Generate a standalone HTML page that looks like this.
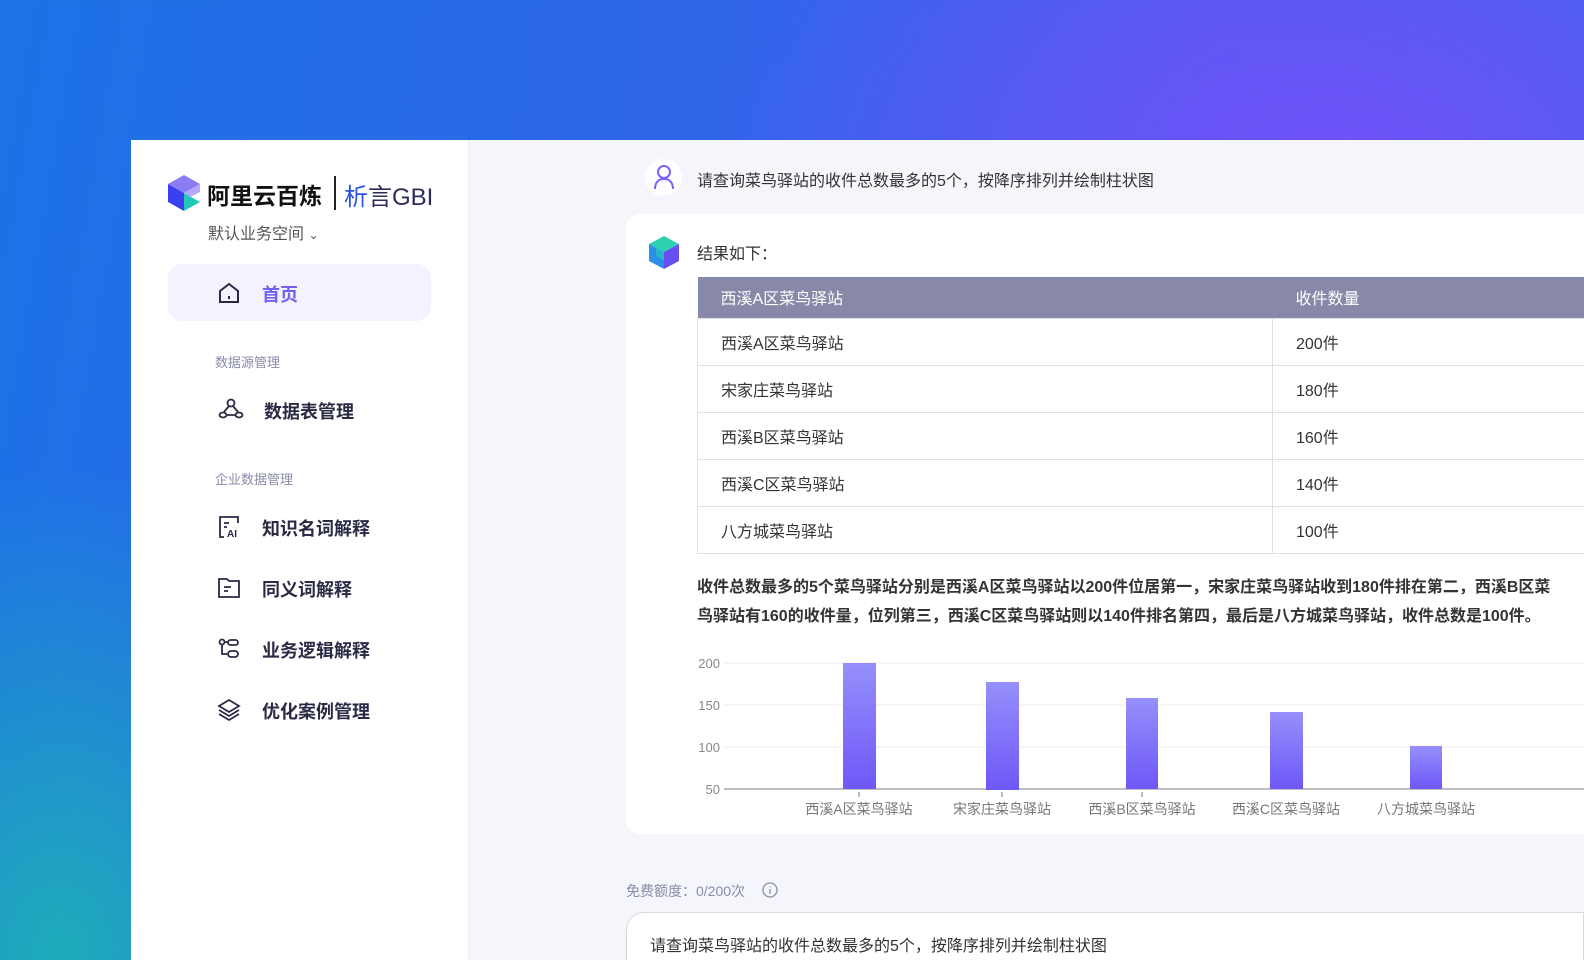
<!DOCTYPE html>
<html><head><meta charset="utf-8"><style>
*{margin:0;padding:0;box-sizing:border-box}
html,body{width:1584px;height:960px;overflow:hidden}
body{position:relative;font-family:"Liberation Sans","Noto Sans CJK SC",sans-serif;
background:
radial-gradient(ellipse 900px 500px at 1350px 160px, rgba(120,80,250,0.85), rgba(120,80,250,0) 70%),
radial-gradient(ellipse 500px 700px at 60px 960px, rgba(30,180,180,0.9), rgba(30,180,180,0) 70%),
linear-gradient(100deg,#1c72e6 0%,#2f66ea 40%,#4a5cef 70%,#3566ea 100%);}
.panel{position:absolute;left:131px;top:140px;width:1453px;height:820px;background:#f5f6fb}
.side{position:absolute;left:131px;top:140px;width:338px;height:820px;background:#fff;border-right:1px solid #ebecf2}
.t{position:absolute;white-space:nowrap}
.nav{font-size:18px;color:#2a2a45;font-weight:bold}
.sec{font-size:13px;color:#8a8ca8}
.card{position:absolute;left:626px;top:214px;width:980px;height:620px;background:#fff;border-radius:14px}
table{position:absolute;left:697px;top:277px;width:900px;border-collapse:collapse;font-size:16px;color:#333}
th{background:#8889a8;color:#fff;text-align:left;font-weight:normal;height:41px;padding-left:23px}
td{height:47px;border:1px solid #dfe0e6;padding-left:23px}
</style></head><body>
<div class="panel"></div>
<div class="side"></div>
<svg class="t" style="left:168px;top:175px" width="32" height="36" viewBox="0 0 32 36">
<polygon points="16,0 32,9 16,18 0,9" fill="#8a7cf5"/>
<polygon points="0,9 16,18 16,36 0,27" fill="#3b3ff0"/>
<polygon points="16,18 32,27 16,36" fill="#21c8b8"/>
<polygon points="16,18 32,9 32,17 22,22" fill="#b3a9fb"/>
</svg>
<div class="t" style="left:207px;top:177px;font-size:23px;color:#111;font-weight:bold">阿里云百炼</div>
<div class="t" style="left:334px;top:176px;width:2px;height:34px;background:#222"></div>
<div class="t" style="left:344px;top:177px;font-size:24px;color:#2c2c5a"><span style="color:#2a52e8">析</span>言GBI</div>
<div class="t" style="left:208px;top:220px;font-size:16px;color:#555">默认业务空间 <span style="font-size:12px">⌄</span></div>
<div class="t" style="left:168px;top:264px;width:263px;height:57px;background:#f3f2fe;border-radius:14px"></div>
<svg class="t" style="left:217px;top:281px" width="24" height="24" viewBox="0 0 24 24" fill="none" stroke="#2a2a45" stroke-width="2"><path d="M3 10 L12 3 L21 10 V21 H3 Z"/><path d="M12 15v3"/></svg>
<div class="t nav" style="left:262px;top:281px;color:#7060f0">首页</div>
<div class="t sec" style="left:215px;top:352px">数据源管理</div>
<svg class="t" style="left:218px;top:398px" width="26" height="22" viewBox="0 0 26 22" fill="none" stroke="#2a2a45" stroke-width="1.8"><circle cx="13" cy="5" r="3.5"/><ellipse cx="5" cy="17" rx="3.5" ry="2.5"/><ellipse cx="21" cy="17" rx="3.5" ry="2.5"/><path d="M11 8 L6 14 M15 8 L20 14 M8 17 H18"/></svg>
<div class="t nav" style="left:264px;top:398px">数据表管理</div>
<div class="t sec" style="left:215px;top:469px">企业数据管理</div>
<svg class="t" style="left:217px;top:515px" width="24" height="24" viewBox="0 0 24 24" fill="none" stroke="#2a2a45" stroke-width="1.8"><path d="M12 2H3V22H7M12 2H21V8"/><path d="M7 8H12M7 12H10"/><text x="10" y="22" font-size="10" font-weight="bold" fill="#2a2a45" stroke="none" font-family="Liberation Sans">AI</text></svg>
<div class="t nav" style="left:262px;top:515px">知识名词解释</div>
<svg class="t" style="left:217px;top:576px" width="24" height="24" viewBox="0 0 24 24" fill="none" stroke="#2a2a45" stroke-width="1.8"><path d="M2 3H10L12 5H22V21H2Z"/><path d="M7 11H14M7 15H11"/></svg>
<div class="t nav" style="left:262px;top:576px">同义词解释</div>
<svg class="t" style="left:217px;top:637px" width="24" height="24" viewBox="0 0 24 24" fill="none" stroke="#2a2a45" stroke-width="1.8"><circle cx="5" cy="5" r="2.5"/><path d="M5 8V17H10"/><rect x="11" y="3" width="10" height="5" rx="2.5"/><rect x="11" y="14" width="10" height="6" rx="3"/><path d="M8 5H11"/></svg>
<div class="t nav" style="left:262px;top:637px">业务逻辑解释</div>
<svg class="t" style="left:217px;top:698px" width="24" height="24" viewBox="0 0 24 24" fill="none" stroke="#2a2a45" stroke-width="1.8"><path d="M12 2L22 8L12 14L2 8Z"/><path d="M2 12L12 18L22 12M2 16L12 22L22 16"/></svg>
<div class="t nav" style="left:262px;top:698px">优化案例管理</div>
<div class="t" style="left:645px;top:159px;width:37px;height:37px;border-radius:50%;background:#fff"></div>
<svg class="t" style="left:652px;top:164px" width="24" height="26" viewBox="0 0 24 26" fill="none" stroke="#7a64f5" stroke-width="2"><circle cx="12" cy="8" r="6"/><path d="M3 25C3 18 7 15 12 15S21 18 21 25"/></svg>
<div class="t" style="left:697px;top:167px;font-size:16px;color:#333">请查询菜鸟驿站的收件总数最多的5个，按降序排列并绘制柱状图</div>
<div class="card"></div>
<svg class="t" style="left:648px;top:236px" width="32" height="34" viewBox="0 0 32 34">
<polygon points="16,0 31,8 16,16 1,8" fill="#2ed0b0"/>
<polygon points="1,8 16,16 16,33 1,25" fill="#2b8fe8"/>
<polygon points="16,16 31,8 31,25 16,33" fill="#6a4ff0"/>
<polygon points="8,12 16,16 16,24 8,20" fill="#24b8c8"/>
</svg>
<div class="t" style="left:697px;top:240px;font-size:16px;color:#333">结果如下：</div>
<table>
<tr><th style="width:575px">西溪A区菜鸟驿站</th><th>收件数量</th></tr>
<tr><td>西溪A区菜鸟驿站</td><td>200件</td></tr>
<tr><td>宋家庄菜鸟驿站</td><td>180件</td></tr>
<tr><td>西溪B区菜鸟驿站</td><td>160件</td></tr>
<tr><td>西溪C区菜鸟驿站</td><td>140件</td></tr>
<tr><td>八方城菜鸟驿站</td><td>100件</td></tr>
</table>
<div class="t" style="left:697px;top:573px;font-size:16px;line-height:29px;color:#333;font-weight:bold">收件总数最多的5个菜鸟驿站分别是西溪A区菜鸟驿站以200件位居第一，宋家庄菜鸟驿站收到180件排在第二，西溪B区菜<br>鸟驿站有160的收件量，位列第三，西溪C区菜鸟驿站则以140件排名第四，最后是八方城菜鸟驿站，收件总数是100件。</div>
<svg class="t" style="left:680px;top:650px" width="904" height="180" viewBox="680 650 904 180" font-family="Liberation Sans,Noto Sans CJK SC,sans-serif">
<defs><linearGradient id="g" x1="0" y1="0" x2="0" y2="1"><stop offset="0" stop-color="#968ffb"/><stop offset="1" stop-color="#6e58f8"/></linearGradient></defs>
<g stroke="#eeeef2"><line x1="724" y1="663" x2="1584" y2="663"/><line x1="724" y1="705" x2="1584" y2="705"/><line x1="724" y1="747" x2="1584" y2="747"/></g>
<line x1="724" y1="789" x2="1584" y2="789" stroke="#aaa" stroke-width="1.5"/>
<g font-size="13" fill="#888" text-anchor="end"><text x="720" y="668">200</text><text x="720" y="710">150</text><text x="720" y="752">100</text><text x="720" y="794">50</text></g>
<g fill="url(#g)"><rect x="843" y="663" width="33" height="126"/><rect x="986" y="682" width="33" height="108"/><rect x="1126" y="698" width="32" height="91"/><rect x="1270" y="712" width="33" height="77"/><rect x="1410" y="746" width="32" height="43"/></g>
<g stroke="#777"><line x1="859" y1="792" x2="859" y2="797"/><line x1="1002" y1="792" x2="1002" y2="797"/><line x1="1142" y1="792" x2="1142" y2="797"/></g>
<g font-size="14" fill="#777" text-anchor="middle"><text x="859" y="814">西溪A区菜鸟驿站</text><text x="1002" y="814">宋家庄菜鸟驿站</text><text x="1142" y="814">西溪B区菜鸟驿站</text><text x="1286" y="814">西溪C区菜鸟驿站</text><text x="1426" y="814">八方城菜鸟驿站</text></g>
</svg>
<div class="t" style="left:626px;top:881px;font-size:14px;color:#8a8ca8">免费额度：0/200次</div>
<svg class="t" style="left:762px;top:882px" width="16" height="16" viewBox="0 0 16 16" fill="none" stroke="#8a8ca8" stroke-width="1.3"><circle cx="8" cy="8" r="7"/><path d="M8 7V12M8 4.5V5.5"/></svg>
<div class="t" style="left:626px;top:912px;width:958px;height:60px;background:#fff;border:1.5px solid #d8d8e0;border-radius:18px 0 0 0"></div>
<div class="t" style="left:650px;top:932px;font-size:16px;color:#333">请查询菜鸟驿站的收件总数最多的5个，按降序排列并绘制柱状图</div>
</body></html>
